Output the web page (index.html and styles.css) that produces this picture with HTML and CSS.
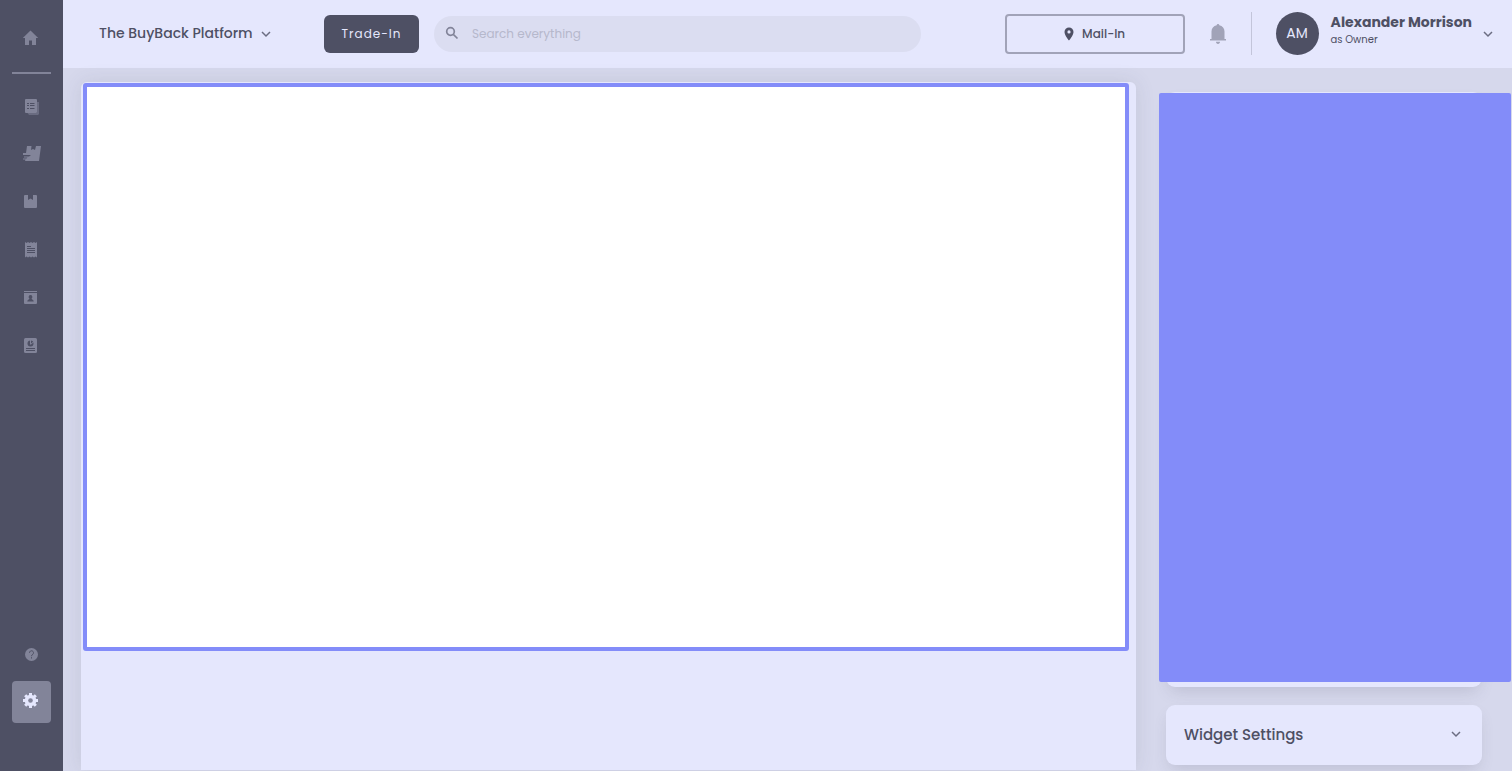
FILE: index.html
```html
<!DOCTYPE html>
<html lang="en">
<head>
<meta charset="UTF-8" />
<meta name="viewport" content="width=device-width, initial-scale=1" />
<title>The BuyBack Platform</title>
<link rel="stylesheet" href="styles.css">
</head>
<body>

<nav class="sidebar" aria-label="Main">
  <a class="nav-link home" href="#" aria-label="Home">
    <svg width="20" height="18" viewBox="0 0 20 18"><path d="M10.500 1.500 2.800 9H5v7h4v-4.500h3V16h4V9h2.200z"/></svg>
  </a>
  <hr class="divider">
  <a class="nav-link" href="#" aria-label="Orders">
    <svg width="20" height="18" viewBox="0 0 20 18"><path d="M16 5h2v12l-1 1H8l-1.500-2H16z" opacity=".55"/><rect x="4" y="2" width="12" height="14" rx="1"/><path class="cut" d="M6 6.500h2M9 6.500h4.500M6 8.500h2M9 8.500h4.500M6 11.500h2M9 11.500h4.500"/></svg>
  </a>
  <a class="nav-link" href="#" aria-label="Shipping">
    <svg width="20" height="18" viewBox="0 0 20 18"><path d="M6 1h4.500L10 5l2-1 2 1 1-4h5l-2 15H4l.5-1.500H2v-1h3.500l1-1H3v-1h5l2-1.500H2V8h3z"/></svg>
  </a>
  <a class="nav-link" href="#" aria-label="Inventory">
    <svg width="20" height="18" viewBox="0 0 20 18"><path d="M4 2h3v5l2.500-1.500L12 7V2h3a1 1 0 0 1 1 1v11a1 1 0 0 1-1 1H4a1 1 0 0 1-1-1V3a1 1 0 0 1 1-1z"/></svg>
  </a>
  <a class="nav-link" href="#" aria-label="Invoices">
    <svg width="20" height="18" viewBox="0 0 20 18"><path d="m4 1 1.500 1L7 1l1.500 1L10 1l1.500 1L13 1l1.500 1L16 1v15.500l-1.500-1-1.500 1-1.500-1-1.500 1-1.500-1-1.500 1-1.500-1-1.500 1z"/><path class="cut" d="M6 5.500h4M6 7.500h8M6 9.500h8M6 11.500h8"/></svg>
  </a>
  <a class="nav-link" href="#" aria-label="Customers">
    <svg width="20" height="18" viewBox="0 0 20 18"><path d="M3 2h13v1H3zM3 4h13v10a1 1 0 0 1-1 1H4a1 1 0 0 1-1-1z"/><path class="hole" d="M9.500 6a1.900 1.900 0 0 1 1 3.500c0 1 2.200 1 2.200 3H6.300c0-2 2.200-2 2.200-3a1.900 1.900 0 0 1 1-3.500z"/></svg>
  </a>
  <a class="nav-link" href="#" aria-label="Reports">
    <svg width="20" height="18" viewBox="0 0 20 18"><rect x="3" y="1" width="13" height="15" rx="1.500"/><circle class="hole" cx="9.500" cy="6.500" r="3"/><path d="M9 3h1v4L9 8zM10 6.500l2.500-2 .5.500-3 2.500z"/><path class="cut" d="M5 11.500h9M5 13.500h9"/></svg>
  </a>
  <div class="nav-bottom">
    <a class="nav-link help" href="#" aria-label="Help">
      <svg width="20" height="18" viewBox="0 0 20 18"><circle cx="10.500" cy="9.500" r="6.500"/><path class="cut" d="M8.500 7.800a2 2 0 1 1 3.300 1.500c-.8.600-1.300.9-1.300 1.900M10.500 12.200v1.300"/></svg>
    </a>
    <a class="nav-link active" href="#" aria-label="Settings" aria-current="page">
      <svg width="20" height="18" viewBox="0 0 20 18"><circle cx="9.500" cy="8.500" r="5.800"/><path d="M8 1h3v15H8z"/><path d="M8 1h3v15H8z" transform="rotate(45 9.500 8.500)"/><path d="M8 1h3v15H8z" transform="rotate(90 9.500 8.500)"/><path d="M8 1h3v15H8z" transform="rotate(135 9.500 8.500)"/><circle class="hub" cx="9.500" cy="8.500" r="2.300"/></svg>
    </a>
  </div>
</nav>

<div class="page">
  <header class="topbar">
    <button class="store" type="button">The BuyBack Platform
      <svg class="chevron" width="12" height="12" viewBox="0 0 12 12"><path d="m2 4 4 4 4-4"/></svg>
    </button>
    <button class="trade" type="button">Trade-In</button>
    <label class="search">
      <svg width="16" height="16" viewBox="0 0 16 16"><circle cx="6.500" cy="5.500" r="3.800"/><path d="m9.300 8.300 4.200 4.200"/></svg>
      <input type="search" placeholder="Search everything" aria-label="Search everything">
    </label>
    <button class="mail" type="button">
      <svg width="10" height="14" viewBox="0 0 10 14"><path fill-rule="evenodd" d="M5 .5A4.500 4.500 0 0 0 .5 5C.5 8.300 5 13.500 5 13.500S9.500 8.300 9.500 5A4.500 4.500 0 0 0 5 .5zm0 6a1.600 1.600 0 1 1 0-3.200 1.600 1.600 0 0 1 0 3.200z"/></svg>
      Mail-In
    </button>
    <button class="bell" type="button" aria-label="Notifications">
      <svg width="18" height="22" viewBox="0 0 18 22"><path d="M9 1c.8 0 1.300.6 1.300 1.300C13.500 3 15.500 5.500 15.500 8.500V16H17v1.500H1V16h1.500V8.500c0-3 2-5.500 5.200-6.200C7.700 1.600 8.200 1 9 1zM7 18.800h4c0 1.300-.8 2.200-2 2.200s-2-.9-2-2.200z"/></svg>
    </button>
    <button class="account" type="button">
      <span class="avatar">AM</span>
      <span class="who">
        <span class="name">Alexander Morrison</span>
        <span class="role">as Owner</span>
      </span>
      <svg class="chevron" width="12" height="12" viewBox="0 0 12 12"><path d="m2 4 4 4 4-4"/></svg>
    </button>
  </header>

  <div class="content">
    <main class="panel">
      <div class="canvas"></div>
    </main>
    <aside class="options">
      <section class="card preview">
        <div class="cover"></div>
      </section>
      <button class="card widget" type="button">Widget Settings
        <svg class="chevron" width="12" height="12" viewBox="0 0 12 12"><path d="m2 4 4 4 4-4"/></svg>
      </button>
    </aside>
  </div>
</div>

</body>
</html>
```
FILE: styles.css
```css
* {
  box-sizing: border-box;
}

body {
  margin: 0;
  min-height: 100vh;
  display: flex;
  font-family: Poppins, Inter, sans-serif;
  color: #4e5064;
  background: #d6d8ec;
}

button {
  font: inherit;
  color: inherit;
  background: none;
  border: none;
  padding: 0;
  cursor: pointer;
}

svg {
  display: block;
  flex: none;
}

/* Sidebar */
.sidebar {
  flex: none;
  width: 63px;
  padding: 14px 12px 48px;
  display: flex;
  flex-direction: column;
  background: #4e5064;
}

.nav-link {
  height: 48px;
  padding-left: 9px;
  display: flex;
  align-items: center;
  border-radius: 4px;
}

.nav-link svg {
  fill: #828499;
}

.nav-link .cut {
  fill: none;
  stroke: #4e5064;
  stroke-width: 1;
}

.nav-link .hole {
  fill: #4e5064;
}

.home {
  padding-left: 8px;
}

.divider {
  width: 100%;
  height: 2px;
  margin: 10px 0 8px;
  border: none;
  background: #828499;
}

.nav-bottom {
  margin-top: auto;
}

.help {
  height: 54px;
}

.active {
  height: 42px;
  padding-bottom: 2px;
  background: #828499;
}

.nav-link.active svg {
  fill: #e5e7fd;
}

.nav-link.active .hub {
  fill: #828499;
}

/* Top bar */
.page {
  flex: 1;
  min-width: 0;
  display: flex;
  flex-direction: column;
}

.topbar {
  height: 68px;
  padding: 0 18px 0 36px;
  display: flex;
  align-items: center;
  background: #e5e7fd;
}

.chevron {
  fill: none;
  stroke: #6b6d82;
  stroke-width: 1.5;
}

.store {
  width: 225px;
  padding-bottom: 1px;
  display: flex;
  align-items: center;
  gap: 7px;
  font-size: 14px;
  font-weight: 500;
  white-space: nowrap;
}

.trade {
  width: 95px;
  height: 38px;
  border-radius: 6px;
  background: #4e5064;
  color: #e5e7fd;
  font-size: 12px;
  letter-spacing: 1px;
}

.search {
  flex: 1;
  height: 36px;
  margin: 0 84px 0 15px;
  padding: 0 10px;
  display: flex;
  align-items: center;
  gap: 12px;
  border-radius: 18px;
  background: #dbddf1;
}

.search svg {
  fill: none;
  stroke: #828499;
  stroke-width: 1.7;
}

.search input {
  flex: 1;
  min-width: 0;
  padding: 0;
  border: none;
  outline: none;
  background: none;
  color: #4e5064;
  font: inherit;
  font-size: 12px;
}

.search input::placeholder {
  color: #b6b8cc;
}

.mail {
  width: 180px;
  height: 40px;
  display: flex;
  align-items: center;
  justify-content: center;
  gap: 8px;
  border: 2px solid #a1a3b8;
  border-radius: 4px;
  font-size: 12px;
  font-weight: 500;
}

.mail svg {
  fill: #4e5064;
}

.bell {
  margin: 0 24px;
}

.bell svg {
  fill: #a1a3b8;
}

.account {
  display: flex;
  align-items: center;
  padding-left: 24px;
  margin-bottom: 1px;
  border-left: 1px solid #c3c5da;
}

.avatar {
  width: 43px;
  height: 43px;
  margin-right: 12px;
  border-radius: 50%;
  display: flex;
  align-items: center;
  justify-content: center;
  background: #4e5064;
  color: #e5e7fd;
  font-size: 14px;
}

.who {
  display: flex;
  flex-direction: column;
  margin-bottom: 6px;
  margin-right: 10px;
  text-align: left;
  white-space: nowrap;
}

.name {
  font-size: 14px;
  line-height: 19px;
  font-weight: 700;
}

.role {
  font-size: 10px;
  line-height: 16px;
}

/* Content */
.content {
  flex: 1;
  display: flex;
  gap: 30px;
  padding: 14px 30px 1px 18px;
}

.panel {
  flex: 1;
  padding: 1px 7px 0 2px;
  border-radius: 6px 6px 0 0;
  background: #e5e7fd;
  box-shadow: 0 0 20px rgba(78, 80, 100, 0.12);
}

.canvas {
  min-height: 568px;
  border: 4px solid #838cf9;
  border-radius: 3px;
  background: #fff;
}

.options {
  flex: none;
  width: 316px;
  padding: 10px 0 5px;
  display: flex;
  flex-direction: column;
  gap: 18px;
}

.card {
  border-radius: 9px;
  background: #e5e7fd;
  box-shadow: 0 8px 16px -4px rgba(78, 80, 100, 0.18);
}

.preview {
  position: relative;
  flex: 1;
}

/* Covers the card and hangs over its sides */
.cover {
  position: absolute;
  inset: 1px -29px 5px -7px;
  border-radius: 2px;
  background: #838cf9;
}

.widget {
  height: 60px;
  padding: 0 20px 2px 18px;
  display: flex;
  align-items: center;
  justify-content: space-between;
  font-size: 15px;
  font-weight: 500;
}
```
